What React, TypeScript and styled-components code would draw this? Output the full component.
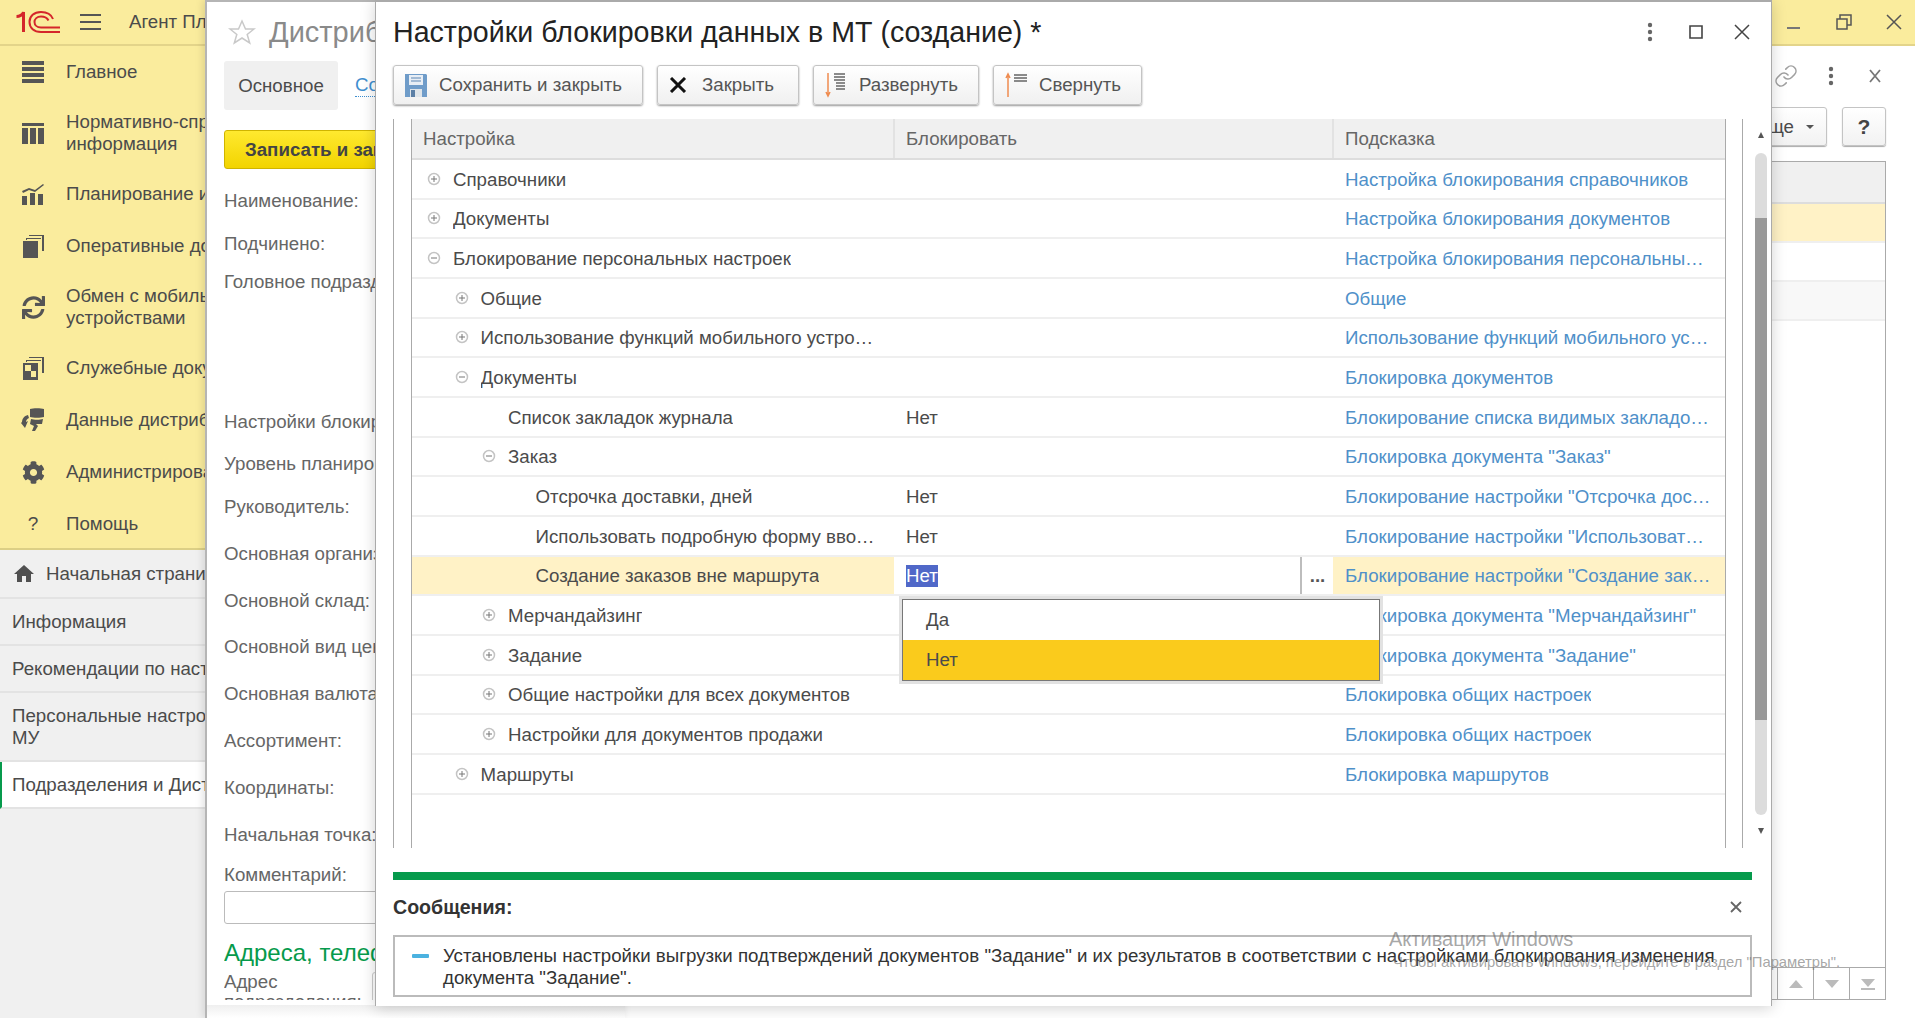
import React from "react"
import styled, { createGlobalStyle } from "styled-components"
import { FaCog, FaSync } from "react-icons/fa"
import { MdHome } from "react-icons/md"
import { Link as LinkIcon } from "lucide-react"

const GlobalStyle = createGlobalStyle`
  html, body {
    margin: 0;
    padding: 0;
    overflow: hidden;
    background: #fff;
    font-family: "Liberation Sans", Arial, sans-serif;
    color: #4b4b4b;
  }
  * { box-sizing: border-box; }
`

const Page = styled.div`
  position: relative;
  width: 1915px;
  height: 1018px;
  overflow: hidden;
  display: flex;
  flex-direction: column;
  font-size: 18.7px;
  line-height: 22px;
`

/* shell: yellow bar, section panel, list behind the windows */
const TopBar = styled.header`
  flex: none;
  height: 46px;
  display: flex;
  align-items: center;
  background: #faec9d;
  border-bottom: 2px solid #e3d48a;
  padding-left: 16px;
`
const BurgerBtn = styled.div`
  margin-left: 20px;
  width: 21px;
  height: 16px;
  border-top: 2px solid #555;
  border-bottom: 2px solid #555;
  position: relative;
  &::after {
    content: "";
    position: absolute;
    left: 0;
    right: 0;
    top: 5px;
    height: 2px;
    background: #555;
  }
`
const AppTitle = styled.div`
  margin-left: 28px;
  white-space: nowrap;
`
const WindowControls = styled.div`
  margin-left: auto;
  margin-right: 13px;
  display: flex;
  align-items: center;
  gap: 34px;
  color: #555;
`
const Body = styled.div`
  flex: 1;
  min-height: 0;
  display: flex;
`
const Sidebar = styled.nav`
  flex: none;
  width: 205px;
  background: #f0f0f0;
  overflow: hidden;
`
const SectionList = styled.div`
  background: #faec9d;
  border-bottom: 2px solid #dccf85;
  height: 504px;
`
const SectionItem = styled.div`
  min-height: 52px;
  padding: 13px 0 13px 21px;
  display: flex;
  align-items: center;
  gap: 21px;
  white-space: pre;
`
const SectionIcon = styled.svg`
  flex: none;
  width: 24px;
  height: 24px;
  fill: #555;
`
const SectionGlyph = styled.span`
  flex: none;
  width: 24px;
  height: 24px;
  display: flex;
  align-items: center;
  justify-content: center;
  color: #555;
  font-size: 23px;
`
const HelpMark = styled.span`
  flex: none;
  width: 24px;
  text-align: center;
  font-size: 19px;
`
const OpenItem = styled.div<{ $active?: boolean }>`
  min-height: 45px;
  padding: 12px 0 11px 12px;
  display: flex;
  align-items: center;
  gap: 10px;
  white-space: pre;
  border-bottom: 2px solid #e3e3e3;
  background: ${(p) => (p.$active ? "#fff" : "transparent")};
  border-left: ${(p) => (p.$active ? "2px solid #069a4c" : "none")};
  padding-left: ${(p) => (p.$active ? "10px" : "12px")};
`
const HomeGlyph = styled.span`
  flex: none;
  width: 24px;
  height: 24px;
  display: flex;
  align-items: center;
  justify-content: center;
  font-size: 28px;
  color: #505050;
`
const ListArea = styled.main`
  flex: 1;
  min-width: 0;
  padding: 0 29px 18px 20px;
  display: flex;
  flex-direction: column;
`
const ListIcons = styled.div`
  flex: none;
  height: 59px;
  display: flex;
  align-items: center;
  justify-content: flex-end;
  gap: 30px;
  color: #a0a0a0;
`
const ListActions = styled.div`
  flex: none;
  height: 56px;
  padding-top: 2px;
  display: flex;
  justify-content: flex-end;
  gap: 15px;
`
const PlainBtn = styled.div`
  height: 39px;
  padding: 0 12px;
  display: flex;
  align-items: center;
  gap: 12px;
  border: 1px solid #c4c4c4;
  border-radius: 3px;
  background: linear-gradient(#fff, #f2f2f2);
  box-shadow: 0 1px 1px #aaa;
`
const HelpBtn = styled(PlainBtn)`
  width: 44px;
  justify-content: center;
  font-size: 21px;
  font-weight: 700;
  color: #444;
`
const CaretDown = styled.span`
  width: 0;
  height: 0;
  border-left: 4px solid transparent;
  border-right: 4px solid transparent;
  border-top: 4px solid #555;
`
const ListGrid = styled.div`
  flex: 1;
  display: flex;
  flex-direction: column;
  border: 1px solid #aaa;
`
const ListHead = styled.div`
  flex: none;
  height: 42px;
  background: #f0f0f0;
  border-bottom: 2px solid #ddd;
`
const ListRow = styled.div<{ $tone: string }>`
  flex: none;
  height: 39px;
  background: ${(p) => p.$tone};
  border-bottom: 2px solid #efefef;
`
const ListFill = styled.div`
  flex: 1;
`
const ListNav = styled.div`
  flex: none;
  height: 32px;
  display: flex;
  justify-content: flex-end;
  border-top: 1px solid #aaa;
`
const ListNavCell = styled.div`
  width: 36px;
  display: flex;
  align-items: center;
  justify-content: center;
  border-left: 1px solid #aaa;
`

/* the form window */
const FormWindow = styled.section`
  position: absolute;
  left: 205px;
  top: 0;
  width: 420px;
  height: 1018px;
  background: #fff;
  border-left: 2px solid #b5b5b5;
  border-top: 2px solid #b5b5b5;
  box-shadow: -2px 0 8px rgba(0, 0, 0, 0.12);
  padding-left: 17px;
`
const FormBody = styled.div`
  height: 998px;
  overflow: hidden;
  white-space: nowrap;
`
const FormFoot = styled.div`
  position: absolute;
  left: 0;
  right: 0;
  bottom: 0;
  height: 13px;
  background: linear-gradient(#efefef, #fff);
`
const FormHead = styled.div`
  height: 59px;
  display: flex;
  align-items: center;
  gap: 13px;
  padding-left: 4px;
  font-size: 29px;
  color: #8a8a8a;
`
const Tabs = styled.div`
  display: flex;
  align-items: center;
  gap: 17px;
`
const TabActive = styled.div`
  width: 114px;
  height: 49px;
  display: flex;
  align-items: center;
  justify-content: center;
  background: #f0f0f0;
  border-radius: 3px;
`
const TabLink = styled.span`
  color: #3f8fd0;
  border-bottom: 1px dotted #3f8fd0;
`
const DefaultBtn = styled.div`
  margin-top: 20px;
  width: 400px;
  height: 39px;
  padding-left: 20px;
  display: flex;
  align-items: center;
  font-weight: 700;
  color: #444;
  border: 1px solid #cfb400;
  border-radius: 3px;
  background: linear-gradient(#ffe92f, #f2d400);
`
const FormLabel = styled.div<{ $h: number; $top?: number }>`
  height: ${(p) => p.$h}px;
  margin-top: ${(p) => p.$top || 0}px;
  color: #666;
`
const CommentInput = styled.div`
  width: 400px;
  height: 33px;
  border: 1px solid #bbb;
  border-radius: 3px;
`
const GroupTitle = styled.div`
  margin-top: 15px;
  font-size: 24px;
  line-height: 28px;
  color: #069a4c;
`
const AddressRow = styled.div`
  margin-top: 5px;
  display: flex;
  gap: 10px;
  color: #666;
  line-height: 20px;
`
const AddressInput = styled.div`
  width: 240px;
  height: 33px;
  border: 1px solid #ccc;
  border-radius: 3px;
`

/* the dialog */
const Dialog = styled.section`
  position: absolute;
  left: 375px;
  top: 0;
  width: 1397px;
  height: 1006px;
  background: #fff;
  border: 1px solid #aaa;
  border-top: 2px solid #aaa;
  border-bottom: none;
  box-shadow: 0 2px 14px rgba(0, 0, 0, 0.18);
  display: flex;
  flex-direction: column;
`
const DialogHead = styled.div`
  flex: none;
  height: 63px;
  display: flex;
  align-items: center;
  padding: 0 21px 4px 17px;
`
const DialogTitle = styled.h1`
  margin: 0;
  font-size: 28.6px;
  line-height: 32px;
  font-weight: 400;
  color: #222;
`
const DialogTools = styled.div`
  margin-left: auto;
  display: flex;
  align-items: center;
  gap: 31px;
  color: #444;
  & > :first-child {
    margin-right: 5px;
  }
`
const Toolbar = styled.div`
  flex: none;
  height: 40px;
  margin: 0 0 14px 17px;
  display: flex;
  gap: 14px;
`
const ToolBtn = styled.button<{ $gap: number; $right?: number }>`
  height: 40px;
  padding: 0 ${(p) => p.$right || 20}px 0 11px;
  display: flex;
  align-items: center;
  gap: ${(p) => p.$gap}px;
  font: inherit;
  color: #555;
  border: 1px solid #c4c4c4;
  border-radius: 3px;
  background: linear-gradient(#fff, #f0f0f0);
  box-shadow: 0 1px 2px #999;
`
const TreePanel = styled.div`
  flex: none;
  height: 729px;
  margin-left: 17px;
  padding-left: 17px;
  display: flex;
  border-left: 1px solid #aaa;
`
const TreeTable = styled.div`
  flex: none;
  width: 1315px;
  border-left: 1px solid #aaa;
  border-right: 1px solid #aaa;
`
const TreeHead = styled.div`
  height: 41px;
  display: grid;
  grid-template-columns: 482px 439px 392px;
  background: #f0f0f0;
  border-bottom: 2px solid #ddd;
  color: #666;
`
const HeadCell = styled.div<{ $sep?: boolean }>`
  display: flex;
  align-items: center;
  padding-left: 11px;
  border-left: ${(p) => (p.$sep ? "2px solid #e2e2e2" : "none")};
  margin-left: ${(p) => (p.$sep ? "-1px" : "0")};
`
const TreeRow = styled.div`
  height: 39.67px;
  display: grid;
  grid-template-columns: 482px 439px 392px;
  border-bottom: 2px solid #efefef;
`
const NameCell = styled.div<{ $level: number; $on?: boolean }>`
  min-width: 0;
  padding: 2px 12px 0 ${(p) => 15 + p.$level * 27.5}px;
  display: flex;
  align-items: center;
  gap: 12px;
  background: ${(p) => (p.$on ? "#fff2c6" : "transparent")};
`
const Toggle = styled.svg`
  flex: none;
  width: 14px;
  height: 14px;
  margin-top: -2px;
`
const ToggleGap = styled.span`
  flex: none;
  width: 14px;
`
const CellText = styled.span`
  min-width: 0;
  overflow: hidden;
  white-space: nowrap;
  text-overflow: ellipsis;
`
const ValueCell = styled.div`
  padding: 2px 0 0 12px;
  display: flex;
  align-items: center;
`
const HintCell = styled.div<{ $on?: boolean }>`
  min-width: 0;
  padding: 2px 12px 0;
  display: flex;
  align-items: center;
  color: #4f90c9;
  background: ${(p) => (p.$on ? "#fff2c6" : "transparent")};
`
const EditCell = styled.div`
  position: relative;
  display: flex;
  align-items: center;
  padding: 2px 0 0 12px;
`
const EditSelection = styled.span`
  background: #5068c8;
  color: #fff;
`
const ChoiceBtn = styled.div`
  position: absolute;
  right: 0;
  top: 0;
  bottom: 0;
  width: 33px;
  border-left: 2px solid #bdbdbd;
  display: flex;
  align-items: center;
  justify-content: center;
  padding-top: 2px;
  font-weight: 700;
  color: #555;
`
const DropList = styled.div`
  position: absolute;
  left: 8px;
  top: 42px;
  width: 478px;
  z-index: 3;
  background: #fff;
  border: 1px solid #777;
  box-shadow: 0 0 0 3px #e2e2e2;
`
const DropItem = styled.div<{ $on?: boolean }>`
  height: 40px;
  padding-left: 23px;
  display: flex;
  align-items: center;
  background: ${(p) => (p.$on ? "#facb1c" : "#fff")};
`
const ScrollColumn = styled.div`
  flex: none;
  width: 36px;
  margin-left: 16px;
  padding-top: 13px;
  border-left: 1px solid #aaa;
  display: flex;
  flex-direction: column;
  align-items: center;
`
const ScrollTrack = styled.div`
  flex: none;
  width: 12px;
  height: 662px;
  margin: 15px 0 13px;
  border-radius: 6px;
  background: linear-gradient(#dcdcdc 0 65px, #999 65px 567px, #dcdcdc 567px);
`
const ScrollArrow = styled.span<{ $down?: boolean }>`
  width: 0;
  height: 0;
  border-left: 3px solid transparent;
  border-right: 3px solid transparent;
  border-bottom: ${(p) => (p.$down ? "none" : "6px solid #555")};
  border-top: ${(p) => (p.$down ? "6px solid #555" : "none")};
`
const GreenBar = styled.div`
  flex: none;
  height: 8px;
  margin: 24px 19px 0 17px;
  background: #069a4c;
`
const MessagesHead = styled.div`
  flex: none;
  height: 55px;
  margin: 0 19px 0 17px;
  padding-bottom: 2px;
  display: flex;
  align-items: center;
  justify-content: space-between;
  padding-right: 10px;
  color: #333;
`
const MessagesTitle = styled.strong`
  font-weight: 700;
  font-size: 19.6px;
`
const MessageBox = styled.div`
  flex: none;
  height: 62px;
  margin: 0 19px 0 17px;
  padding: 8px 24px 0 17px;
  display: flex;
  gap: 14px;
  color: #333;
  border: 2px solid #bbb;
`
const MessageDash = styled.span`
  flex: none;
  width: 17px;
  height: 4px;
  margin-top: 9px;
  border-radius: 1px;
  background: #4bb2e0;
`
const Watermark = styled.div`
  position: absolute;
  left: 1393px;
  top: 926px;
  pointer-events: none;
  color: rgba(110, 110, 110, 0.62);
  font-size: 14.8px;
  line-height: 20px;
  white-space: nowrap;
`
const WatermarkTitle = styled.div`
  font-size: 20px;
  line-height: 26px;
  margin-left: -4px;
`

const Logo = () => (
  <svg width="44" height="22" viewBox="0 0 44 22" fill="none" stroke="#d4262b">
    <path d="M0.5 5.5C3 5.5 7 4 7.5 1V21" strokeWidth="3" />
    <path d="M37 8C35 3 30 1 25 1C18 1 13.5 5 13.5 11C13.5 17 18 21 25 21H44" strokeWidth="2" />
    <path d="M32.5 9.5C31 6.5 28 5.5 25 5.5C21 5.5 18.5 8 18.5 11C18.5 14 21 16.5 25 16.5H44" strokeWidth="2" />
  </svg>
)

const sectionIcons: Record<string, React.ReactNode> = {
  main: <path d="M1 1h22v4H1zM1 7h22v4H1zM1 13h22v4H1zM1 19h22v4H1z" />,
  table: <path d="M1 2h22v3H1zM1 7h6v16H1zM9 7h6v16H9zM17 7h6v16h-6z" />,
  plan: <path d="M1 14h5v9H1zM9 11h5v12H9zM17 12h5v11h-5zM1 9l7-3 6 2 8-6 1 1-9 7-6-2-6 3z" />,
  docs: <path d="M2 7h15v17H2zM5 4h15v1H6v1H5zM8 1h15v16h-2V2H8z" />,
  service: <path d="M5 4h15v1H6v1H5zM8 1h15v16h-2V2H8zM2 7h15v17H2zm2 2v6h6V9zm6 6v6h5v-6z" fillRule="evenodd" />,
  data: (
    <path d="M9 1c3-1 11-1 14 0v8c-3 1-11 1-14 0zM10 11c3 1 9 1 12 0l-1 5h-6l2 2-3 5h-3l2-5-4-2zM1 14c0-3 2-6 6-7l1 3c-2 1-3 2-3 4l2-1-3 7-4-5z" />
  )
}

const sections = [
  { icon: "main", title: "Главное" },
  { icon: "table", title: "Нормативно-справочная\nинформация" },
  { icon: "plan", title: "Планирование и закупки" },
  { icon: "docs", title: "Оперативные документы" },
  { icon: "sync", title: "Обмен с мобильными\nустройствами" },
  { icon: "service", title: "Служебные документы" },
  { icon: "data", title: "Данные дистрибьюторов" },
  { icon: "gear", title: "Администрирование" },
  { icon: "", title: "Помощь" }
]

const formLabels = [
  { text: "Наименование:", h: 43 },
  { text: "Подчинено:", h: 38 },
  { text: "Головное подразделение:", h: 140 },
  { text: "Настройки блокировки данных:", h: 42 },
  { text: "Уровень планирования:", h: 43 },
  { text: "Руководитель:", h: 47 },
  { text: "Основная организация:", h: 47 },
  { text: "Основной склад:", h: 46 },
  { text: "Основной вид цен:", h: 47 },
  { text: "Основная валюта:", h: 47 },
  { text: "Ассортимент:", h: 47 },
  { text: "Координаты:", h: 47 },
  { text: "Начальная точка:", h: 40 },
  { text: "Комментарий:", h: 27 }
]

type Row = {
  name: string
  level: number
  open?: boolean
  leaf?: boolean
  value?: string
  hint: string
  editing?: boolean
}

const rows: Row[] = [
  { name: "Справочники", level: 0, hint: "Настройка блокирования справочников" },
  { name: "Документы", level: 0, hint: "Настройка блокирования документов" },
  { name: "Блокирование персональных настроек", level: 0, open: true, hint: "Настройка блокирования персональных настроек" },
  { name: "Общие", level: 1, hint: "Общие" },
  { name: "Использование функций мобильного устройства", level: 1, hint: "Использование функций мобильного устройства" },
  { name: "Документы", level: 1, open: true, hint: "Блокировка документов" },
  { name: "Список закладок журнала", level: 2, leaf: true, value: "Нет", hint: "Блокирование списка видимых закладок журнала" },
  { name: "Заказ", level: 2, open: true, hint: "Блокировка документа \"Заказ\"" },
  { name: "Отсрочка доставки, дней", level: 3, leaf: true, value: "Нет", hint: "Блокирование настройки \"Отсрочка доставки, дней\"" },
  { name: "Использовать подробную форму ввода заказа", level: 3, leaf: true, value: "Нет", hint: "Блокирование настройки \"Использовать подробную форму\"" },
  { name: "Создание заказов вне маршрута", level: 3, leaf: true, editing: true, hint: "Блокирование настройки \"Создание заказов вне маршрута\"" },
  { name: "Мерчандайзинг", level: 2, hint: "Блокировка документа \"Мерчандайзинг\"" },
  { name: "Задание", level: 2, hint: "Блокировка документа \"Задание\"" },
  { name: "Общие настройки для всех документов", level: 2, hint: "Блокировка общих настроек" },
  { name: "Настройки для документов продажи", level: 2, hint: "Блокировка общих настроек" },
  { name: "Маршруты", level: 1, hint: "Блокировка маршрутов" }
]

const SectionMark = ({ icon }: { icon: string }) => {
  if (icon === "sync") {
    return (
      <SectionGlyph>
        <FaSync />
      </SectionGlyph>
    )
  }
  if (icon === "gear") {
    return (
      <SectionGlyph>
        <FaCog />
      </SectionGlyph>
    )
  }
  if (!icon) return <HelpMark>?</HelpMark>
  return <SectionIcon viewBox="0 0 24 24">{sectionIcons[icon]}</SectionIcon>
}

const ToggleIcon = ({ open }: { open?: boolean }) => (
  <Toggle viewBox="0 0 14 14" fill="none">
    <circle cx="7" cy="7" r="5.5" stroke="#c4c4c4" strokeWidth="1.5" />
    <path d={open ? "M4 7h6" : "M4 7h6M7 4v6"} stroke="#777" />
  </Toggle>
)

const Dots = () => (
  <svg width="6" height="20" viewBox="0 0 6 20" fill="#666">
    <circle cx="3" cy="3" r="2.2" />
    <circle cx="3" cy="10" r="2.2" />
    <circle cx="3" cy="17" r="2.2" />
  </svg>
)

const ExpandIcon = ({ down }: { down?: boolean }) => (
  <svg width="24" height="26" viewBox="0 0 24 26" fill="none">
    <path d={down ? "M3 1v22M1 20l2 4 2-4" : "M3 25V3M1 6l2-4 2 4"} stroke="#ef8c50" strokeWidth="1.5" />
    <path
      d={down ? "M9 2h11M9 5h11M9 8h11M11 11h9M11 14h9M11 17h9" : "M9 3h13M9 6h13M9 9h13"}
      stroke="#666"
      strokeWidth="1.5"
    />
  </svg>
)

const App: React.FC = () => {
  return (
    <Page>
      <GlobalStyle />
      <TopBar>
        <Logo />
        <BurgerBtn />
        <AppTitle>Агент Плюс: Управление дистрибуцией</AppTitle>
        <WindowControls>
          <svg width="16" height="24" viewBox="0 0 16 24" stroke="#777" strokeWidth="2">
            <path d="M1 18h13" />
          </svg>
          <svg width="16" height="16" viewBox="0 0 16 16" fill="none" stroke="#555" strokeWidth="1.5">
            <path d="M1 5h10v10H1zM4 5V1h11v10h-4" />
          </svg>
          <svg width="16" height="16" viewBox="0 0 16 16" fill="none" stroke="#555" strokeWidth="1.5">
            <path d="M1 1l14 14M15 1L1 15" />
          </svg>
        </WindowControls>
      </TopBar>

      <Body>
        <Sidebar>
          <SectionList>
            {sections.map((s) => (
              <SectionItem key={s.title}>
                <SectionMark icon={s.icon} />
                {s.title}
              </SectionItem>
            ))}
          </SectionList>
          <OpenItem>
            <HomeGlyph>
              <MdHome />
            </HomeGlyph>
            Начальная страница
          </OpenItem>
          <OpenItem>Информация</OpenItem>
          <OpenItem>Рекомендации по настройке</OpenItem>
          <OpenItem>{"Персональные настройки\nМУ"}</OpenItem>
          <OpenItem $active>Подразделения и Дистрибьюторы</OpenItem>
        </Sidebar>

        <ListArea>
          <ListIcons>
            <LinkIcon size={24} strokeWidth={1.6} />
            <Dots />
            <svg width="22" height="14" viewBox="0 0 22 14" fill="none" stroke="#777" strokeWidth="1.8">
              <path d="M6 1l10 12M16 1L6 13" />
            </svg>
          </ListIcons>
          <ListActions>
            <PlainBtn>
              Еще
              <CaretDown />
            </PlainBtn>
            <HelpBtn>?</HelpBtn>
          </ListActions>
          <ListGrid>
            <ListHead />
            <ListRow $tone="#fff2c6" />
            <ListRow $tone="#fff" />
            <ListRow $tone="#f8f8f8" />
            <ListFill />
            <ListNav>
              <ListNavCell>
                <svg width="16" height="10" viewBox="0 0 16 10" fill="#bbb">
                  <path d="M8 1l7 8H1z" />
                </svg>
              </ListNavCell>
              <ListNavCell>
                <svg width="16" height="10" viewBox="0 0 16 10" fill="#bbb">
                  <path d="M8 9L1 1h14z" />
                </svg>
              </ListNavCell>
              <ListNavCell>
                <svg width="16" height="12" viewBox="0 0 16 12" fill="#bbb">
                  <path d="M8 9L1 1h14zM1 10h14v2H1z" />
                </svg>
              </ListNavCell>
            </ListNav>
          </ListGrid>
        </ListArea>
      </Body>

      <FormWindow>
        <FormBody>
          <FormHead>
            <svg width="28" height="26" viewBox="0 0 28 26" fill="none" stroke="#c9c9c9" strokeWidth="1.5">
              <path d="M14 2l3.500 8H26l-6.800 5.500 2.500 8.500L14 19l-7.700 5 2.500-8.500L2 10h8.500z" />
            </svg>
            Дистрибьюторы
          </FormHead>
          <Tabs>
            <TabActive>Основное</TabActive>
            <TabLink>Состав</TabLink>
          </Tabs>
          <DefaultBtn>Записать и закрыть</DefaultBtn>
          {formLabels.map((l, i) => (
            <FormLabel key={l.text} $h={l.h} $top={i === 0 ? 21 : 0}>
              {l.text}
            </FormLabel>
          ))}
          <CommentInput />
          <GroupTitle>Адреса, телефоны</GroupTitle>
          <AddressRow>
            <span>
              Адрес
              <br />
              подразделения:
            </span>
            <AddressInput />
          </AddressRow>
        </FormBody>
        <FormFoot />
      </FormWindow>

      <Dialog>
        <DialogHead>
          <DialogTitle>Настройки блокировки данных в МТ (создание) *</DialogTitle>
          <DialogTools>
            <Dots />
            <svg width="14" height="14" viewBox="0 0 14 14" fill="none" stroke="#444" strokeWidth="1.6">
              <path d="M1 1h12v12H1z" />
            </svg>
            <svg width="16" height="16" viewBox="0 0 16 16" fill="none" stroke="#444" strokeWidth="1.5">
              <path d="M1 1l14 14M15 1L1 15" />
            </svg>
          </DialogTools>
        </DialogHead>

        <Toolbar>
          <ToolBtn $gap={12}>
            <svg width="22" height="24" viewBox="0 0 22 24">
              <path d="M0 1h21l1 1v22H0z" fill="#6f9cc9" />
              <path d="M4 2h14v10H4z" fill="#e8eef5" />
              <path d="M6 5h10M6 8h10" stroke="#8aa9c9" strokeWidth="1.5" />
              <path d="M5 16h12v8H5z" fill="#dfe5ea" />
              <path d="M6 17h4v7H6z" fill="#5b7fa6" />
            </svg>
            Сохранить и закрыть
          </ToolBtn>
          <ToolBtn $gap={15} $right={24}>
            <svg width="18" height="16" viewBox="0 0 18 16" stroke="#111" strokeWidth="3">
              <path d="M2 1l14 14M16 1L2 15" />
            </svg>
            Закрыть
          </ToolBtn>
          <ToolBtn $gap={10}>
            <ExpandIcon down />
            Развернуть
          </ToolBtn>
          <ToolBtn $gap={10}>
            <ExpandIcon />
            Свернуть
          </ToolBtn>
        </Toolbar>

        <TreePanel>
          <TreeTable>
            <TreeHead>
              <HeadCell>Настройка</HeadCell>
              <HeadCell $sep>Блокировать</HeadCell>
              <HeadCell $sep>Подсказка</HeadCell>
            </TreeHead>
            {rows.map((r) => (
              <TreeRow key={r.level + r.name}>
                <NameCell $level={r.level} $on={r.editing}>
                  {r.leaf ? <ToggleGap /> : <ToggleIcon open={r.open} />}
                  <CellText>{r.name}</CellText>
                </NameCell>
                {r.editing ? (
                  <EditCell>
                    <EditSelection>Нет</EditSelection>
                    <ChoiceBtn>...</ChoiceBtn>
                    <DropList>
                      <DropItem>Да</DropItem>
                      <DropItem $on>Нет</DropItem>
                    </DropList>
                  </EditCell>
                ) : (
                  <ValueCell>{r.value}</ValueCell>
                )}
                <HintCell $on={r.editing}>
                  <CellText>{r.hint}</CellText>
                </HintCell>
              </TreeRow>
            ))}
          </TreeTable>
          <ScrollColumn>
            <ScrollArrow />
            <ScrollTrack />
            <ScrollArrow $down />
          </ScrollColumn>
        </TreePanel>

        <GreenBar />
        <MessagesHead>
          <MessagesTitle>Сообщения:</MessagesTitle>
          <svg width="12" height="12" viewBox="0 0 12 12" stroke="#666" strokeWidth="1.8">
            <path d="M1 1l10 10M11 1L1 11" />
          </svg>
        </MessagesHead>
        <MessageBox>
          <MessageDash />
          <span>
            Установлены настройки выгрузки подтверждений документов "Задание" и их результатов в соответствии с
            настройками блокирования изменения документа "Задание".
          </span>
        </MessageBox>
      </Dialog>

      <Watermark>
        <WatermarkTitle>Активация Windows</WatermarkTitle>
        Чтобы активировать Windows, перейдите в раздел "Параметры".
      </Watermark>
    </Page>
  )
}

export default App
